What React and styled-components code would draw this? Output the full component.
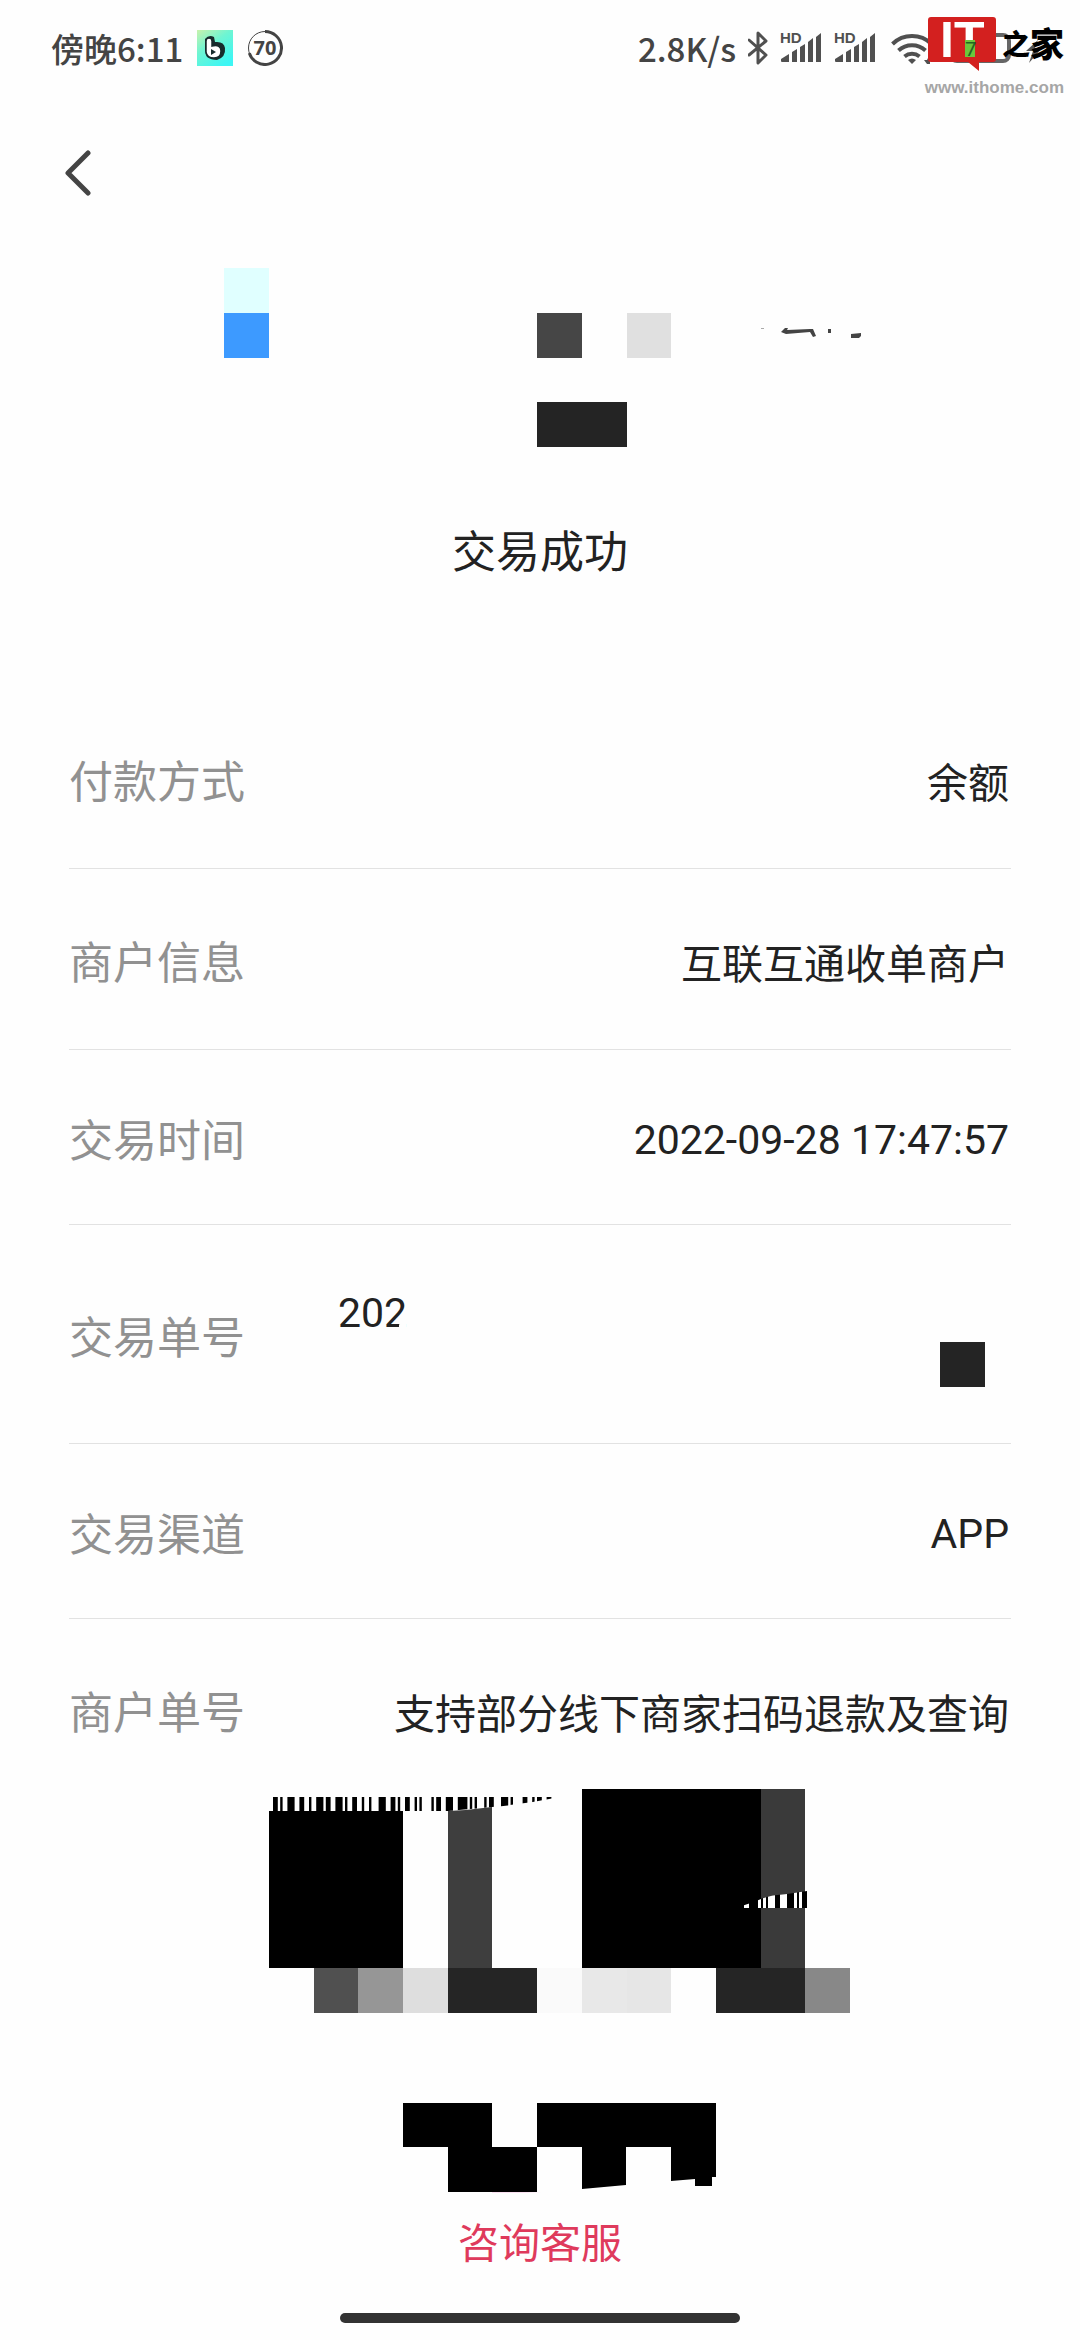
import React from 'react';
import styled, { createGlobalStyle } from 'styled-components';

const GlobalStyle = createGlobalStyle`
  * {
    box-sizing: border-box;
  }

  body {
    margin: 0;
    background: #fefefe;
    color: #222;
    font-family: Roboto, 'Noto Sans CJK SC', sans-serif;
  }

  svg {
    display: block;
  }
`;

const Page = styled.div`
  position: relative;
  display: flex;
  flex-direction: column;
`;

const StatusBar = styled.header`
  display: flex;
  justify-content: space-between;
  align-items: center;
  height: 96px;
  padding: 0 35px 0 51px;
  color: #444;
  font-family: 'Noto Sans CJK SC', sans-serif;
  font-size: 33px;
  font-weight: 500;
  line-height: 48px;
`;

const StatusGroup = styled.div`
  display: flex;
  align-items: center;
  gap: ${(props) => props.$gap}px;
`;

const Watermark = styled.div`
  position: absolute;
  top: 12px;
  right: 16px;
  display: flex;
  flex-direction: column;
  align-items: flex-end;
`;

const WatermarkUrl = styled.span`
  color: #a6a6a6;
  font: bold 17px/24px 'Liberation Sans', sans-serif;
`;

const NavBar = styled.nav`
  padding: 54px 64px 72px;
`;

const BackButton = styled.button`
  display: block;
  padding: 0;
  border: none;
  background: none;
  color: #444;
  cursor: pointer;
`;

const Drawing = styled.svg`
  width: 100%;
  height: auto;
`;

const Result = styled.h1`
  margin: 73px 0 103px;
  font-size: 44px;
  font-weight: 400;
  line-height: 64px;
  text-align: center;
`;

const Details = styled.dl`
  margin: 0 69px 48px;
`;

const Row = styled.div`
  display: flex;
  justify-content: space-between;
  align-items: center;
  padding: 64px 0 58px;
  border-bottom: 1px solid #e2e2e2;

  &:last-child {
    padding-bottom: 0;
    border-bottom: none;
  }
`;

const Label = styled.dt`
  padding-top: 4px;
  color: #919191;
  font-size: 44px;
  line-height: 48px;
`;

const Value = styled.dd`
  position: relative;
  margin: 0;
  padding-top: ${(props) => (props.$latin ? 0 : 6)}px;
  padding-right: 2px;
  font-size: 41px;
  line-height: ${(props) => (props.$latin ? 48 : 52)}px;
  text-align: right;
`;

const OrderNumber = styled(Value)`
  width: 673px;
  height: 96px;
  text-align: left;
`;

const OrderMask = styled.svg`
  position: absolute;
  top: 0;
  left: 0;
`;

const ServiceLink = styled.a`
  align-self: center;
  margin: 22px 0 40px;
  color: #df3a5c;
  font-size: 41px;
  line-height: 58px;
  text-decoration: none;
`;

const HomeIndicator = styled.div`
  align-self: center;
  width: 37%;
  height: 10px;
  margin-bottom: 17px;
  border-radius: 5px;
  background: #333;
`;

const AppIcon = () => (
  <svg width="36" height="36" viewBox="0 0 36 36">
    <defs>
      <linearGradient id="appIcon" x1="0" y1="0" x2="0.7" y2="1">
        <stop offset="0" stopColor="#c9f2ac" />
        <stop offset="0.45" stopColor="#6ff5d2" />
        <stop offset="1" stopColor="#3df6f4" />
      </linearGradient>
    </defs>
    <rect width="36" height="36" fill="url(#appIcon)" />
    <path
      d="M8 9q4-5 9-2l1 5q9-1 10 6q1 9-8 12q-6 0-10-3q-2-3-2-7z"
      fill="#172b2c"
    />
    <path
      d="M9 11q0-3 3-3t3 3v5q9-2 9 5q0 7-7 7q-7 0-8-6z"
      fill="#fff"
      stroke="#172b2c"
      strokeWidth="1.5"
    />
    <path d="M14 19l5 3-5 3z" fill="#172b2c" />
  </svg>
);

const BatteryRing = () => (
  <svg width="36" height="36" viewBox="0 0 36 36">
    <circle cx="18" cy="18" r="16.5" fill="none" stroke="#444" strokeWidth="1" />
    <path
      d="M18 1.5a16.5 16.5 0 1 1-15.7 21.6"
      fill="none"
      stroke="#444"
      strokeWidth="3"
    />
    <text
      x="18"
      y="25"
      fill="#444"
      fontFamily="Noto Sans"
      fontSize="20"
      fontWeight="700"
      textAnchor="middle"
    >
      70
    </text>
  </svg>
);

const BluetoothIcon = () => (
  <svg width="20" height="36" viewBox="1 0 20 36">
    <path
      d="M2 10l17 15-8 8V3l8 8L2 25"
      fill="none"
      stroke="#505050"
      strokeWidth="3"
      strokeLinejoin="round"
      strokeLinecap="round"
    />
  </svg>
);

const SignalIcon = () => (
  <svg width="42" height="40" viewBox="0 -4 42 40" fill="#505050">
    <path d="M1 27l8-5v8H2q-1 0-1-1zM12 20l5-3v13h-5zM20 15l5-3v18h-5zM28 10l5-4v24h-5zM36 5l5-4v29h-5z" />
    <text x="0" y="11" fontFamily="Liberation Sans" fontSize="15" fontWeight="700">
      HD
    </text>
  </svg>
);

const WifiIcon = () => (
  <svg width="49" height="32" viewBox="0 0 49 32">
    <g fill="none" stroke="#505050" strokeWidth="4">
      <path d="M4.5 12a28 28 0 0 1 39 0" />
      <path d="M10.5 18.500a20 20 0 0 1 27 0" />
      <path d="M16.500 24.500a12 12 0 0 1 15 0" />
    </g>
    <path d="M20 28q4-3 8 0l-4 4z" fill="#505050" />
    <path d="M36 28h3v-2l3 6h-3zM40 26h2v6h-2z" fill="#505050" />
  </svg>
);

const BatteryIcon = () => (
  <svg width="96" height="32" viewBox="0 0 96 32">
    <rect x="2" y="3" width="58" height="26" rx="6" fill="none" stroke="#666" strokeWidth="4" />
    <path d="M89 8L77 19h7l-4 12 13-15h-7z" fill="#555" />
  </svg>
);

const WatermarkLogo = () => (
  <svg width="136" height="64" viewBox="0 -4 136 64">
    <path d="M3 1h62q3 0 3 3v39q0 3-3 3H51v9L40 46H3q-3 0-3-3V4q0-3 3-3z" fill="#d3201f" />
    <text
      x="12"
      y="41"
      fill="#fff"
      fontFamily="Liberation Sans"
      fontSize="50"
      fontWeight="700"
    >
      IT
    </text>
    <rect x="37" y="24" width="10" height="17" fill="#6cc63c" />
    <text x="37" y="40" fill="#262" fontFamily="Noto Sans" fontSize="20">
      7
    </text>
    <g fill="#000" fontFamily="Noto Sans CJK SC" fontWeight="900">
      <text x="74" y="39" fontSize="28">
        之
      </text>
      <text x="102" y="41" fontSize="34">
        家
      </text>
    </g>
  </svg>
);

const MerchantMosaic = () => (
  <Drawing viewBox="0 0 1080 180">
    <rect x="224" y="0" width="45" height="45" fill="#e0ffff" />
    <rect x="224" y="45" width="45" height="45" fill="#3d9aff" />
    <rect x="537" y="45" width="45" height="45" fill="#464646" />
    <rect x="627" y="45" width="44" height="45" fill="#e0e0e0" />
    <rect x="537" y="134" width="90" height="45" fill="#242424" />
    <path
      d="M781 64l4-4h3l-1 2 23-1h3l3 7-3 1-3-5-24 2z"
      fill="#444"
    />
    <path d="M828 61h3v4h-3zM851 66l10-1v3l-2 2h-8z" fill="#444" />
    <rect x="761" y="60" width="3" height="1" fill="#aaa" />
  </Drawing>
);

// [first module, width in modules]
const bars = [
  [0, 2], [3, 1], [6, 3], [11, 2], [15, 1], [18, 3], [22, 2], [26, 3],
  [30, 1], [33, 2], [37, 1], [40, 1], [44, 3], [49, 2], [52, 1], [55, 2],
  [59, 1], [61, 1], [66, 1], [68, 2], [72, 3], [77, 4], [82, 1], [84, 1],
  [88, 1], [90, 2], [95, 3], [99, 1], [104, 2], [108, 1], [110, 2], [114, 2],
];

const CodeMosaic = () => (
  <Drawing viewBox="0 0 1080 404">
    <defs>
      <clipPath id="barsTop">
        <path d="M268 8H560Q526 15 492 18T448 22H268z" />
      </clipPath>
      <clipPath id="barsSide">
        <path d="M738 118Q752 114 761 110T787 105L807 102V119H738z" />
      </clipPath>
    </defs>

    <rect x="269" y="22" width="134" height="157" fill="#000" />
    <path d="M448 22Q470 21 492 18V179H448z" fill="#3e3e3e" />
    <rect x="582" y="0" width="179" height="179" fill="#000" />
    <rect x="761" y="0" width="44" height="179" fill="#3a3a3a" />

    <g clipPath="url(#barsTop)">
      {bars.map(([start, size]) => (
        <rect key={start} x={273 + start * 2.4} y="8" width={size * 2.4} height="15" />
      ))}
    </g>
    <g clipPath="url(#barsSide)">
      <rect x="738" y="100" width="69" height="19" />
      <path
        d="M744 100h5v19h-5zM758 100h3v19h-3zM763 100h3v19h-3zM768 100h7v19h-7zM780 100h7v19h-7zM794 100h3v19h-3zM799 100h3v19h-3z"
        fill="#fff"
      />
    </g>

    <rect x="314" y="179" width="44" height="45" fill="#505050" />
    <rect x="358" y="179" width="45" height="45" fill="#969696" />
    <rect x="403" y="179" width="45" height="45" fill="#dedede" />
    <rect x="448" y="179" width="89" height="45" fill="#252525" />
    <rect x="537" y="179" width="45" height="45" fill="#fafafa" />
    <rect x="582" y="179" width="45" height="45" fill="#e8e8e8" />
    <rect x="627" y="179" width="44" height="45" fill="#e6e6e6" />
    <rect x="716" y="179" width="89" height="45" fill="#252525" />
    <rect x="805" y="179" width="45" height="45" fill="#888" />

    <path d="M492 403h50q-25 1-50 4z" fill="#f9dff0" />
    <path d="M403 314h89v44h45v45h-89v-45h-45z" fill="#000" />
    <path
      d="M537 314h179v74h-4v9h-17v-7l-24 2v-34h-45v38l-44 4v-42h-45z"
      fill="#000"
    />
  </Drawing>
);

const App = () => (
  <Page>
    <GlobalStyle />
    <StatusBar>
      <StatusGroup $gap={14}>
        <span>傍晚6:11</span>
        <AppIcon />
        <BatteryRing />
      </StatusGroup>
      <StatusGroup $gap={12}>
        <span>2.8K/s</span>
        <BluetoothIcon />
        <SignalIcon />
        <SignalIcon />
        <WifiIcon />
        <BatteryIcon />
      </StatusGroup>
    </StatusBar>
    <Watermark>
      <WatermarkLogo />
      <WatermarkUrl>www.ithome.com</WatermarkUrl>
    </Watermark>

    <NavBar>
      <BackButton type="button" aria-label="返回">
        <svg width="28" height="46" viewBox="0 0 28 46">
          <path
            d="M24 3L4 23l20 20"
            fill="none"
            stroke="currentColor"
            strokeWidth="5"
            strokeLinecap="round"
            strokeLinejoin="round"
          />
        </svg>
      </BackButton>
    </NavBar>

    <main>
      <MerchantMosaic />
      <Result>交易成功</Result>
      <Details>
        <Row>
          <Label>付款方式</Label>
          <Value>余额</Value>
        </Row>
        <Row>
          <Label>商户信息</Label>
          <Value>互联互通收单商户</Value>
        </Row>
        <Row>
          <Label>交易时间</Label>
          <Value $latin>2022-09-28 17:47:57</Value>
        </Row>
        <Row>
          <Label>交易单号</Label>
          <OrderNumber $latin>
            202
            <OrderMask width="673" height="98" viewBox="0 0 673 98">
              <path d="M68 20V44H61V36z" fill="#fefefe" />
              <rect x="602" y="53" width="45" height="45" fill="#242424" />
            </OrderMask>
          </OrderNumber>
        </Row>
        <Row>
          <Label>交易渠道</Label>
          <Value $latin>APP</Value>
        </Row>
        <Row>
          <Label>商户单号</Label>
          <Value>支持部分线下商家扫码退款及查询</Value>
        </Row>
      </Details>
      <CodeMosaic />
    </main>
    <ServiceLink href="#service">咨询客服</ServiceLink>
    <HomeIndicator />
  </Page>
);

export default App;
